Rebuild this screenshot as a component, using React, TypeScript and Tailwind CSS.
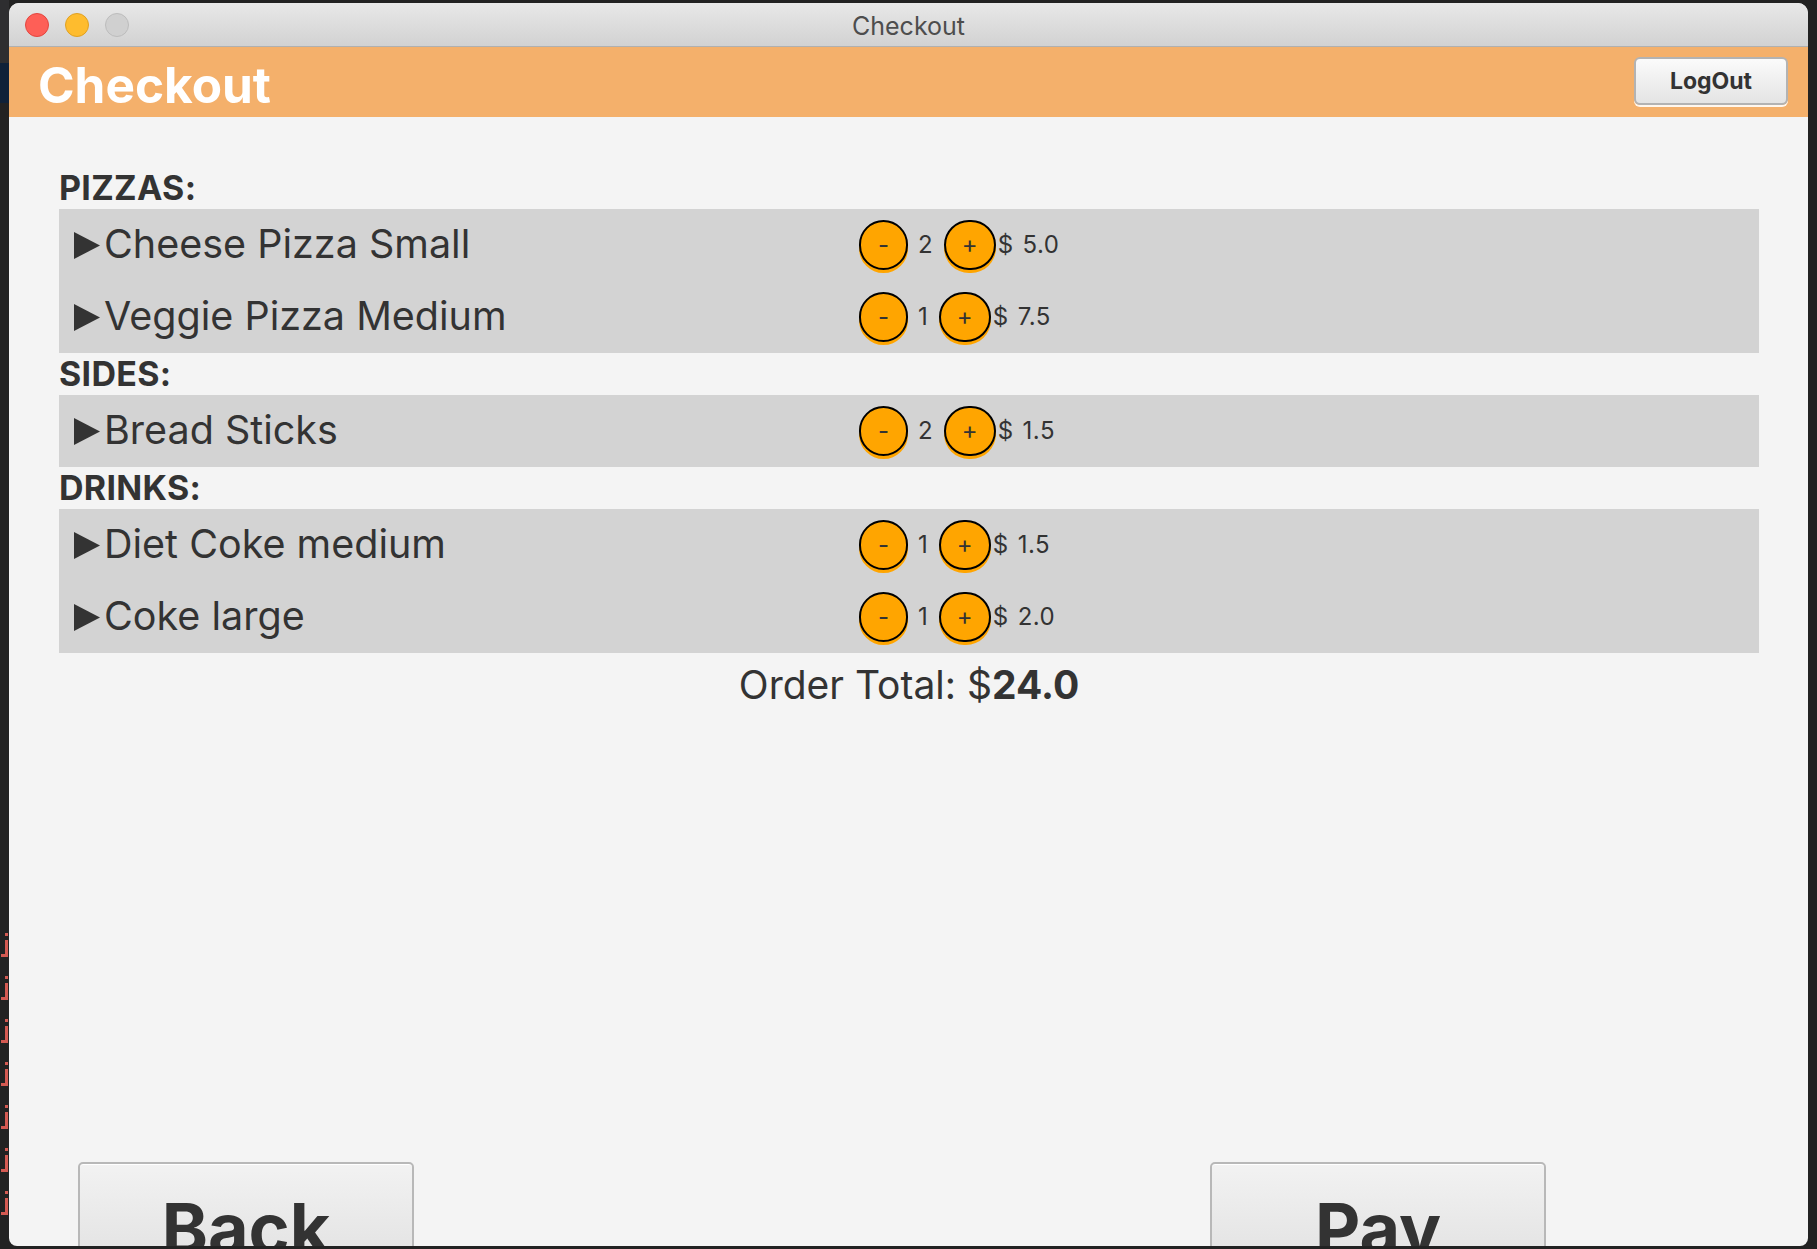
import React from "react";

const FONT = { fontFamily: "Inter, 'Noto Sans', sans-serif" };

function CircleBtn({ label, wide }: { label: string; wide?: boolean }) {
  return (
    <div
      className={
        "flex h-[50px] items-center justify-center rounded-full border-2 border-black bg-[#ffa500] text-[24px] leading-none text-[#333] shadow-[0_3px_0_#ffa500] " +
        (wide ? "w-[52px]" : "w-[49px]")
      }
    >
      {label}
    </div>
  );
}

function Row({ name, qty, price }: { name: string; qty: number; price: string }) {
  return (
    <div className="flex h-[72px] items-center">
      <div className="flex w-[800px] items-center pl-[15px]">
        <svg width="26" height="27" viewBox="0 0 26 27" className="shrink-0">
          <polygon points="0,0 26,13.5 0,27" fill="#333" />
        </svg>
        <span className="ml-[4px] text-[39.5px] leading-none text-[#333]">{name}</span>
      </div>
      <div className="flex items-center">
        <CircleBtn label="-" />
        <span className="ml-[10px] text-[24px] leading-none text-[#333]">{qty}</span>
        <div className="ml-[11px]">
          <CircleBtn label="+" wide />
        </div>
        <span className="ml-[2px] text-[24px] leading-none tracking-[0.5px] text-[#333]">
          $<span className="ml-[9px]">{price}</span>
        </span>
      </div>
    </div>
  );
}

function Label({ text }: { text: string }) {
  return (
    <div className="h-[42px] text-[34px] font-bold leading-[42px] tracking-[0.3px] text-[#333]">{text}</div>
  );
}

function BigButton({ text }: { text: string }) {
  return (
    <div className="h-[130px] w-[336px] shrink-0 rounded-[5px] border-2 border-[#b8b8b8] bg-gradient-to-b from-[#f2f2f2] to-[#dedede] pt-[12px] text-center text-[70px] font-bold leading-normal text-[#333] shadow-[inset_0_1px_0_#ffffff]">
      {text}
    </div>
  );
}

function RedI() {
  return (
    <div className="flex h-[24px] flex-col items-end pr-[1px]">
      <div className="h-[3px] w-[3px] bg-[#d45a52]" />
      <div className="mt-[4px] h-[14px] w-[3px] bg-[#d45a52]" />
      <div className="h-[3px] w-[7px] bg-[#d45a52]" />
    </div>
  );
}

export default function App() {
  const reds = Array.from({ length: 7 });
  return (
    <div className="flex h-[1249px] w-[1817px] overflow-hidden bg-[#222222]" style={FONT}>
      {/* left desktop strip */}
      <div className="flex w-[9px] shrink-0 flex-col overflow-hidden">
        <div className="h-[63px] bg-[#2e2e30]" />
        <div className="h-[40px] bg-[#0f2138]" />
        <div className="h-[830px]" />
        <div className="flex flex-col gap-[19px]">
          {reds.map((_, i) => (
            <RedI key={i} />
          ))}
        </div>
      </div>

      {/* window */}
      <div className="mt-[3px] flex h-[1243px] w-[1799px] shrink-0 flex-col overflow-hidden rounded-t-[10px] rounded-b-[8px] bg-[#f4f4f4]">
        {/* title bar */}
        <div className="relative flex h-[44px] shrink-0 items-center border-b border-[#b0b0b0] bg-gradient-to-b from-[#e8e8e8] to-[#d2d2d2]">
          <div className="flex items-center gap-[16px] pl-[16px]">
            <div className="h-[24px] w-[24px] rounded-full border border-[#e2463f] bg-[#fe5f57]" />
            <div className="h-[24px] w-[24px] rounded-full border border-[#dfa023] bg-[#febc2e]" />
            <div className="h-[24px] w-[24px] rounded-full border border-[#bcbcbc] bg-[#d0d0d0]" />
          </div>
          <div className="absolute inset-0 flex items-center justify-center pt-[4px] text-[25px] text-[#4d4d4d]">
            Checkout
          </div>
        </div>

        {/* orange header */}
        <div className="flex h-[70px] shrink-0 items-start justify-between bg-[#f4b06b] pl-[29px] pr-[20px]">
          <div className="mt-[8px] text-[49.5px] font-bold leading-[60px] text-white">Checkout</div>
          <div className="mt-[10px] flex h-[48px] w-[154px] items-center justify-center rounded-[6px] border-2 border-[#b3b3b3] bg-gradient-to-b from-[#fbfbfb] to-[#e4e4e4] text-[23px] font-bold text-[#333] shadow-[0_2px_0_#fff7ee]">
            LogOut
          </div>
        </div>

        {/* content */}
        <div className="flex flex-1 flex-col pl-[50px] pr-[49px] pt-[50px]">
          <Label text="PIZZAS:" />
          <div className="bg-[#d3d3d3]">
            <Row name="Cheese Pizza Small" qty={2} price="5.0" />
            <Row name="Veggie Pizza Medium" qty={1} price="7.5" />
          </div>
          <Label text="SIDES:" />
          <div className="bg-[#d3d3d3]">
            <Row name="Bread Sticks" qty={2} price="1.5" />
          </div>
          <Label text="DRINKS:" />
          <div className="bg-[#d3d3d3]">
            <Row name="Diet Coke medium" qty={1} price="1.5" />
            <Row name="Coke large" qty={1} price="2.0" />
          </div>
          <div className="mt-[3px] text-center text-[39px] leading-normal text-[#333]">
            Order Total: $<span className="font-bold">24.0</span>
          </div>
        </div>

        {/* bottom buttons */}
        <div className="flex h-[84px] shrink-0 items-start gap-[796px] pl-[69px]">
          <BigButton text="Back" />
          <BigButton text="Pay" />
        </div>
      </div>

      {/* right strip */}
      <div className="flex-1" />
    </div>
  );
}
